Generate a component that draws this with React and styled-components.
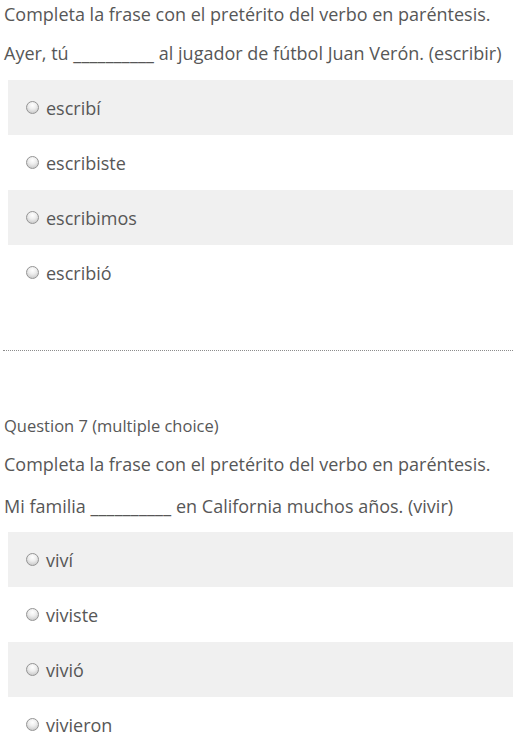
import React from "react";
import styled, { createGlobalStyle } from "styled-components";

const GlobalStyle = createGlobalStyle`
  html, body {
    margin: 0;
    padding: 0;
    background: #fff;
  }
  body {
    font-family: "Open Sans", "Liberation Sans", sans-serif;
    color: #575757;
  }
`;

const questions = [
  {
    label: null,
    prompt: "Completa la frase con el pretérito del verbo en paréntesis.",
    sentence: ["Ayer, tú ", " al jugador de fútbol Juan Verón. (escribir)"],
    options: ["escribí", "escribiste", "escribimos", "escribió"],
  },
  {
    label: "Question 7 (multiple choice)",
    prompt: "Completa la frase con el pretérito del verbo en paréntesis.",
    sentence: ["Mi familia ", " en California muchos años. (vivir)"],
    options: ["viví", "viviste", "vivió", "vivieron"],
  },
];

export default function App() {
  return (
    <Page>
      <GlobalStyle />
      {questions.map((q, i) => (
        <React.Fragment key={i}>
          {i > 0 && <Separator />}
          <Question $first={i === 0}>
            {q.label && <Label>{q.label}</Label>}
            <Text>{q.prompt}</Text>
            <Text $wide={i > 0}>
              {q.sentence[0]}
              <Blank>__________</Blank>
              {q.sentence[1]}
            </Text>
            <Options>
              {q.options.map((opt, j) => (
                <Option key={opt} $shaded={j % 2 === 0}>
                  <Radio />
                  <OptionText>{opt}</OptionText>
                </Option>
              ))}
            </Options>
          </Question>
        </React.Fragment>
      ))}
    </Page>
  );
}

const Page = styled.div`
  padding: 2px 0 0 4px;
`;

const Question = styled.div`
  display: flex;
  flex-direction: column;
  padding-top: ${(p) => (p.$first ? "0" : "64px")};
`;

const Label = styled.div`
  font-size: 16.5px;
  line-height: 22px;
  margin-bottom: 15px;
`;

const Text = styled.p`
  margin: ${(p) => (p.$wide ? "3px 0 14px" : "0 0 15px")};
  font-size: 18px;
  line-height: 24px;
  white-space: nowrap;
`;

const Blank = styled.span`
  letter-spacing: 0.2px;
`;

const Options = styled.div`
  display: flex;
  flex-direction: column;
  margin-left: 4px;
`;

const Option = styled.div`
  display: flex;
  align-items: center;
  height: 55px;
  padding-left: 18px;
  background: ${(p) => (p.$shaded ? "#f0f0f0" : "transparent")};
`;

const Radio = styled.span`
  box-sizing: border-box;
  width: 13px;
  height: 13px;
  border-radius: 50%;
  border: 1px solid #949494;
  background: radial-gradient(circle at 50% 30%, #ffffff 0%, #eeeeee 40%, #bdbdbd 100%);
  margin-right: 7px;
  flex-shrink: 0;
`;

const OptionText = styled.span`
  font-size: 18px;
  line-height: 24px;
`;

const Separator = styled.div`
  margin-top: 50px;
  border-top: 1px dotted #8c8c8c;
  margin-left: -1px;
`;
